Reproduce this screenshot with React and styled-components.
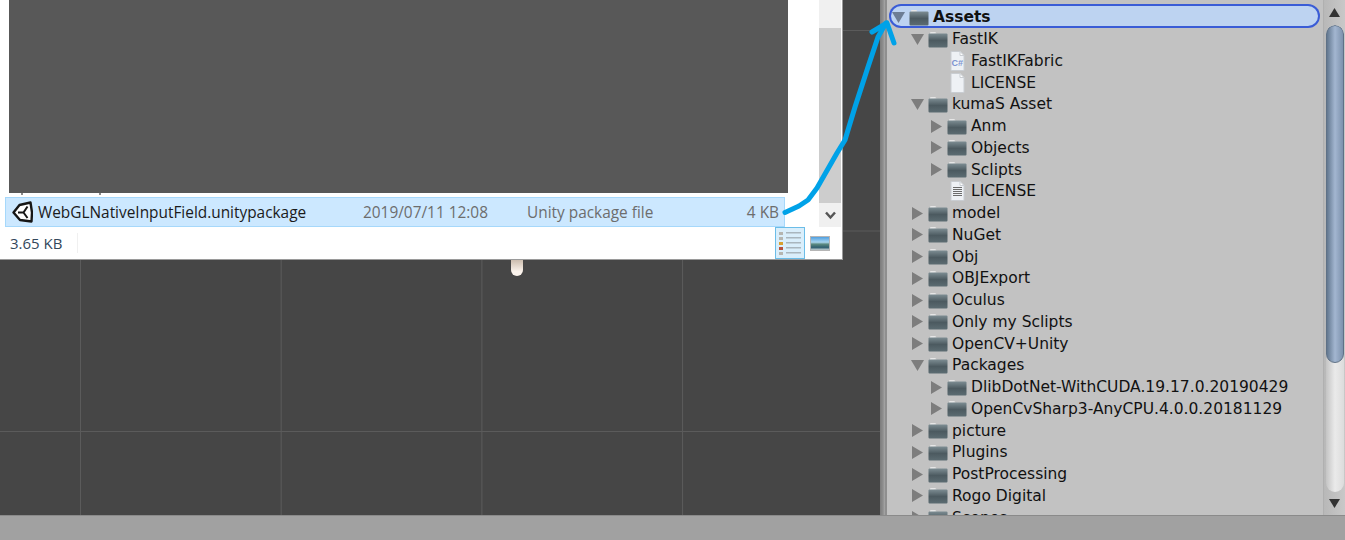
import React from "react";
import styled, { createGlobalStyle } from "styled-components";

const treeRows = [
  { name: "Assets", depth: 0, arrow: "down", icon: "folder", selected: true },
  { name: "FastIK", depth: 1, arrow: "down", icon: "folder" },
  { name: "FastIKFabric", depth: 2, icon: "csharp" },
  { name: "LICENSE", depth: 2, icon: "blank" },
  { name: "kumaS Asset", depth: 1, arrow: "down", icon: "folder" },
  { name: "Anm", depth: 2, arrow: "right", icon: "folder" },
  { name: "Objects", depth: 2, arrow: "right", icon: "folder" },
  { name: "Sclipts", depth: 2, arrow: "right", icon: "folder" },
  { name: "LICENSE", depth: 2, icon: "text" },
  { name: "model", depth: 1, arrow: "right", icon: "folder" },
  { name: "NuGet", depth: 1, arrow: "right", icon: "folder" },
  { name: "Obj", depth: 1, arrow: "right", icon: "folder" },
  { name: "OBJExport", depth: 1, arrow: "right", icon: "folder" },
  { name: "Oculus", depth: 1, arrow: "right", icon: "folder" },
  { name: "Only my Sclipts", depth: 1, arrow: "right", icon: "folder" },
  { name: "OpenCV+Unity", depth: 1, arrow: "right", icon: "folder" },
  { name: "Packages", depth: 1, arrow: "down", icon: "folder" },
  { name: "DlibDotNet-WithCUDA.19.17.0.20190429", depth: 2, arrow: "right", icon: "folder" },
  { name: "OpenCvSharp3-AnyCPU.4.0.0.20181129", depth: 2, arrow: "right", icon: "folder" },
  { name: "picture", depth: 1, arrow: "right", icon: "folder" },
  { name: "Plugins", depth: 1, arrow: "right", icon: "folder" },
  { name: "PostProcessing", depth: 1, arrow: "right", icon: "folder" },
  { name: "Rogo Digital", depth: 1, arrow: "right", icon: "folder" },
  { name: "Scenes", depth: 1, arrow: "right", icon: "folder" }
];

const Global = createGlobalStyle`
  html, body {
    margin: 0;
    padding: 0;
    width: 1345px;
    height: 540px;
    overflow: hidden;
    background: #a1a1a1;
  }
`;

const Page = styled.div`
  position: relative;
  display: flex;
  flex-direction: column;
  width: 1345px;
  height: 540px;
  overflow: hidden;
`;

const Workspace = styled.div`
  display: flex;
  height: 516px;
  border-bottom: 1px solid #8a8a8a;
  box-sizing: border-box;
`;

const StatusStrip = styled.div`
  flex: 1;
  background: #a1a1a1;
`;

const Scene = styled.div`
  position: relative;
  width: 880px;
  background-color: #464646;
  background-image:
    linear-gradient(to right, #5b5b5b 1px, transparent 1px),
    linear-gradient(to bottom, #5b5b5b 1px, transparent 1px);
  background-size: 200.7px 200.5px;
  background-position: 80px 30px;
`;

const Divider = styled.div`
  width: 5px;
  background: linear-gradient(to right, #7c7c7c, #8e8e8e 60%, #a8a8a8);
`;

const Handle = styled.div`
  position: absolute;
  left: 511px;
  top: 258px;
  width: 12px;
  height: 18px;
  border-radius: 0 0 6px 6px;
  background: linear-gradient(to bottom, #c4b4a4, #fbf3ec 75%);
`;

const FileWindow = styled.div`
  position: absolute;
  left: 0;
  top: 0;
  width: 843px;
  height: 260px;
  box-sizing: border-box;
  display: flex;
  flex-direction: column;
  background: #fff;
  border-right: 1px solid #9a9a9a;
  border-bottom: 1px solid #9a9a9a;
  font-family: "Open Sans", "Noto Sans", sans-serif;
`;

const WindowBody = styled.div`
  display: flex;
  height: 227px;
`;

const ListColumn = styled.div`
  display: flex;
  flex-direction: column;
  width: 819px;
`;

const Preview = styled.div`
  margin-left: 9px;
  width: 779px;
  height: 193px;
  background: #585858;
`;

const ClippedMarks = styled.div`
  display: flex;
  gap: 76px;
  height: 2px;
  padding-left: 21px;
`;

const ClippedMark = styled.span`
  width: 2px;
  height: 2px;
  background: #8a8a8a;
`;

const FileRow = styled.div`
  display: flex;
  align-items: center;
  margin: 2px 0 0 5px;
  width: 780px;
  height: 30px;
  box-sizing: border-box;
  background: #cce8ff;
  border: 1px solid #a6d8fb;
  font-size: 15.4px;
`;

const UnityMark = styled.svg`
  flex: none;
  width: 21px;
  height: 22px;
  margin: 0 5px 0 6px;
`;

const FileCell = styled.span`
  width: ${props => props.$width}px;
  flex: none;
  white-space: nowrap;
  color: ${props => (props.$dim ? "#6d6d6d" : "#1b1b1b")};
  text-align: ${props => (props.$right ? "right" : "left")};
`;

const WinScroll = styled.div`
  display: flex;
  flex-direction: column;
  width: 22px;
  background: #f0f0f0;
`;

const WinThumb = styled.div`
  margin-top: 28px;
  height: 175px;
  background: #cdcdcd;
`;

const WinScrollButton = styled.div`
  flex: 1;
  display: flex;
  align-items: center;
  justify-content: center;
`;

const WindowFooter = styled.div`
  flex: 1;
  display: flex;
  align-items: center;
`;

const SizeLabel = styled.span`
  width: 67px;
  padding-left: 10px;
  color: #33475b;
  font-size: 15px;
  line-height: 20px;
  border-right: 1px solid #f0f0f0;
`;

const ViewButtons = styled.div`
  margin-left: auto;
  margin-right: 12px;
  display: flex;
  align-items: center;
  gap: 5px;
`;

const ViewButton = styled.div`
  display: flex;
  align-items: center;
  justify-content: center;
  width: 30px;
  height: 32px;
  box-sizing: border-box;
  background: ${props => (props.$active ? "#d9eefb" : "transparent")};
  border: 1px solid ${props => (props.$active ? "#6bbde8" : "transparent")};
`;

const ThumbIcon = styled.div`
  width: 20px;
  height: 15px;
  box-sizing: border-box;
  border: 1px solid #b5b5b5;
  background: linear-gradient(to bottom, #4f9fe0 0%, #a8d4ee 40%, #5c8a80 55%, #2f5f70 80%, #c9d3d6 100%);
`;

const TreePanel = styled.div`
  flex: 1;
  display: flex;
  min-width: 0;
  background: #c2c2c2;
  border-left: 2px solid #8f8f8f;
`;

const Tree = styled.div`
  flex: 1;
  min-width: 0;
  padding-top: 6px;
  overflow: hidden;
  font-family: "DejaVu Sans", sans-serif;
  font-size: 15.5px;
  color: #111;
`;

const Row = styled.div`
  display: flex;
  align-items: center;
  box-sizing: border-box;
  height: ${props => (props.$selected ? "20px" : "21.75px")};
  margin-bottom: ${props => (props.$selected ? "2.25px" : "0")};
  margin-left: 4px;
  margin-right: 3px;
  padding-left: ${props => props.$depth * 19}px;
  padding-top: ${props => (props.$selected ? "2px" : "0")};
  white-space: nowrap;
  font-weight: ${props => (props.$selected ? 700 : 400)};
  border-radius: ${props => (props.$selected ? "10px" : "0")};
  background: ${props => (props.$selected ? "#bdd3f1" : "transparent")};
  box-shadow: ${props => (props.$selected ? "0 0 0 2px #3a5cd6" : "none")};
`;

const ArrowSlot = styled.span`
  display: flex;
  align-items: center;
  flex: none;
  width: 18px;
`;

const IconSlot = styled.span`
  display: flex;
  flex: none;
  justify-content: center;
  width: 20px;
  margin-right: 4px;
`;

const Scrollbar = styled.div`
  display: flex;
  flex-direction: column;
  align-items: center;
  width: 21px;
  flex: none;
  margin-left: 2px;
  background: linear-gradient(to right, #b8b8b8, #c8c8c8);
  border-left: 1px solid #b0b0b0;
`;

const ScrollCap = styled.div`
  display: flex;
  align-items: center;
  justify-content: center;
  flex: none;
  height: ${props => props.$height}px;
`;

const ScrollTrack = styled.div`
  width: 18px;
  flex: 1;
  border-radius: 9px;
  background: linear-gradient(to right, #c4c4c4, #eaeaea 50%, #dcdcdc);
  overflow: hidden;
`;

const ScrollThumb = styled.div`
  height: 338px;
  border-radius: 9px;
  border: 1px solid #5f7186;
  box-sizing: border-box;
  background: linear-gradient(to right, #62778f, #a3b6d0 50%, #7d92ad);
`;

const ArrowOverlay = styled.svg`
  position: absolute;
  left: 0;
  top: 0;
  pointer-events: none;
`;

const Disclosure = ({ arrow, selected }) => {
  const fill = selected ? "#6d7d94" : "#7d7d7d";
  if (arrow === "down") {
    return (
      <svg width="15" height="13" viewBox="0 0 15 13">
        <path d="M1 1h13L7.5 12z" fill={fill} />
      </svg>
    );
  }
  if (arrow === "right") {
    return (
      <svg width="14" height="15" viewBox="0 0 14 15">
        <path d="M2 1v13l11-6.500z" fill={fill} />
      </svg>
    );
  }
  return null;
};

const FolderIcon = () => (
  <svg width="20" height="17" viewBox="0 0 20 17">
    <defs>
      <linearGradient id="folderBody" x1="0" y1="0" x2="0" y2="1">
        <stop offset="0" stopColor="#7d8d93" />
        <stop offset="0.5" stopColor="#4c5a60" />
        <stop offset="1" stopColor="#5c6c72" />
      </linearGradient>
    </defs>
    <path d="M2 3.500V2q0-1 1-1h4q1 0 1.500 1.500z" fill="#e6e6e6" />
    <rect x="0.500" y="2.500" width="19" height="14" rx="1" fill="url(#folderBody)" />
  </svg>
);

const FileIcon = ({ kind }) => (
  <svg width="15" height="20" viewBox="0 0 15 20">
    <path d="M1 0.500h9l4 4v15H1z" fill="#eef1f5" stroke="#c9cdd2" />
    <path d="M10 0.500v4h4z" fill="#fff" stroke="#c9cdd2" />
    {kind === "csharp" && (
      <text x="1.500" y="15" fontFamily="Liberation Sans" fontSize="9" fontWeight="700" fill="#7c93d0">
        C#
      </text>
    )}
    {kind === "text" &&
      [6, 8, 10, 12, 14].map(y => (
        <rect key={y} x="3" y={y} width="9" height="1" fill="#6c6c6c" />
      ))}
  </svg>
);

const DetailsIcon = () => (
  <svg width="22" height="24" viewBox="0 0 22 24">
    {[1, 6, 11, 16, 21].map((y, i) => (
      <g key={y}>
        <rect x="0" y={y} width="4" height="3" fill={i === 2 ? "#d8a030" : i === 3 ? "#b8503c" : "#b5b5b0"} />
        <rect x="7" y={y} width="15" height="1.500" fill="#a9b6be" />
      </g>
    ))}
  </svg>
);

const App = () => (
  <Page>
    <Global />
    <Workspace>
      <Scene>
        <Handle />
        <FileWindow>
          <WindowBody>
            <ListColumn>
              <Preview />
              <ClippedMarks>
                <ClippedMark />
                <ClippedMark />
              </ClippedMarks>
              <FileRow>
                <UnityMark viewBox="0 0 21 22">
                  <path
                    d="M1.500 11.500L7.500 4 18.500 1.500 20 11.500 19.500 20.500 8 19z"
                    fill="#fff"
                    stroke="#161616"
                    strokeWidth="2.400"
                    strokeLinejoin="round"
                  />
                  <path
                    d="M6 11.500H11.500L15.500 5.500M11.500 11.500L15.500 17"
                    fill="none"
                    stroke="#161616"
                    strokeWidth="2"
                  />
                </UnityMark>
                <FileCell $width={325}>WebGLNativeInputField.unitypackage</FileCell>
                <FileCell $dim $width={164}>2019/07/11 12:08</FileCell>
                <FileCell $dim $width={170}>Unity package file</FileCell>
                <FileCell $dim $right $width={82}>4 KB</FileCell>
              </FileRow>
            </ListColumn>
            <WinScroll>
              <WinThumb />
              <WinScrollButton>
                <svg width="11" height="9" viewBox="0 0 11 9">
                  <path d="M1 1.500l4.500 5 4.500-5" fill="none" stroke="#555" strokeWidth="2.500" />
                </svg>
              </WinScrollButton>
            </WinScroll>
          </WindowBody>
          <WindowFooter>
            <SizeLabel>3.65 KB</SizeLabel>
            <ViewButtons>
              <ViewButton $active>
                <DetailsIcon />
              </ViewButton>
              <ThumbIcon />
            </ViewButtons>
          </WindowFooter>
        </FileWindow>
      </Scene>
      <Divider />
      <TreePanel>
        <Tree>
          {treeRows.map(({ name, depth, arrow, icon, selected }, i) => (
            <Row key={i} $depth={depth} $selected={selected}>
              <ArrowSlot>
                <Disclosure arrow={arrow} selected={selected} />
              </ArrowSlot>
              <IconSlot>
                {icon === "folder" ? <FolderIcon /> : <FileIcon kind={icon} />}
              </IconSlot>
              {name}
            </Row>
          ))}
        </Tree>
        <Scrollbar>
          <ScrollCap $height={25}>
            <svg width="11" height="9" viewBox="0 0 11 9">
              <path d="M0 9L5.500 0 11 9z" fill="#333" />
            </svg>
          </ScrollCap>
          <ScrollTrack>
            <ScrollThumb />
          </ScrollTrack>
          <ScrollCap $height={23}>
            <svg width="11" height="9" viewBox="0 0 11 9">
              <path d="M0 0L5.500 9 11 0z" fill="#333" />
            </svg>
          </ScrollCap>
        </Scrollbar>
      </TreePanel>
    </Workspace>
    <StatusStrip />
    <ArrowOverlay width="1345" height="540" viewBox="0 0 1345 540">
      <path
        d="M785 212.500L799 206 808 200 817 188 837 153 845 140 855 107 868 67 878 37 886 23"
        fill="none"
        stroke="#00a2e8"
        strokeWidth="5"
        strokeLinecap="round"
        strokeLinejoin="round"
      />
      <path
        d="M872 32L887 23 894 43"
        fill="none"
        stroke="#00a2e8"
        strokeWidth="5"
        strokeLinecap="round"
        strokeLinejoin="round"
      />
    </ArrowOverlay>
  </Page>
);

export default App;
